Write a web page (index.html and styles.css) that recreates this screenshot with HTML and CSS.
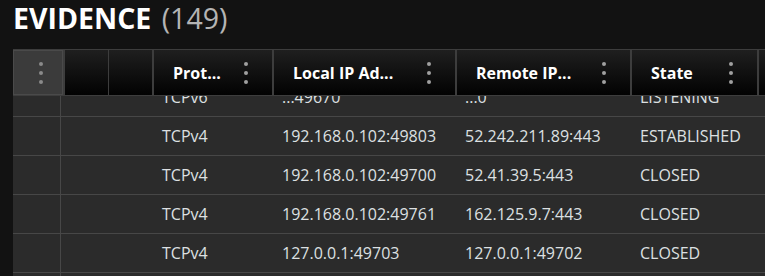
FILE: index.html
```html
<!DOCTYPE html>
<html>
<head>
<meta charset="utf-8">
<link rel="stylesheet" href="styles.css">
</head>
<body>
<div class="page">
  <h1 class="title"><span class="title-main">EVIDENCE</span> <span class="title-count">(149)</span></h1>
  <div class="grid">
    <div class="head">
      <div class="hcell hcell-menu"><svg class="kebab" width="4" height="22" viewBox="0 0 4 22"><circle cx="2" cy="2" r="2"/><circle cx="2" cy="11" r="2"/><circle cx="2" cy="20" r="2"/></svg></div>
      <div class="hcell"></div>
      <div class="hcell"></div>
      <div class="hcell"><span class="hlabel">Prot...</span><svg class="kebab" width="4" height="22" viewBox="0 0 4 22"><circle cx="2" cy="2" r="2"/><circle cx="2" cy="11" r="2"/><circle cx="2" cy="20" r="2"/></svg></div>
      <div class="hcell"><span class="hlabel">Local IP Ad...</span><svg class="kebab" width="4" height="22" viewBox="0 0 4 22"><circle cx="2" cy="2" r="2"/><circle cx="2" cy="11" r="2"/><circle cx="2" cy="20" r="2"/></svg></div>
      <div class="hcell"><span class="hlabel">Remote IP...</span><svg class="kebab" width="4" height="22" viewBox="0 0 4 22"><circle cx="2" cy="2" r="2"/><circle cx="2" cy="11" r="2"/><circle cx="2" cy="20" r="2"/></svg></div>
      <div class="hcell"><span class="hlabel">State</span><svg class="kebab" width="4" height="22" viewBox="0 0 4 22"><circle cx="2" cy="2" r="2"/><circle cx="2" cy="11" r="2"/><circle cx="2" cy="20" r="2"/></svg></div>
      <div class="hcell"></div>
    </div>
    <div class="viewport">
      <div class="rows">
        <div class="row"><div class="c-sel"></div><div class="c-gap"></div><div class="c">TCPv6</div><div class="c">:::49670</div><div class="c">:::0</div><div class="c">LISTENING</div></div>
        <div class="row"><div class="c-sel"></div><div class="c-gap"></div><div class="c">TCPv4</div><div class="c">192.168.0.102:49803</div><div class="c">52.242.211.89:443</div><div class="c">ESTABLISHED</div></div>
        <div class="row"><div class="c-sel"></div><div class="c-gap"></div><div class="c">TCPv4</div><div class="c">192.168.0.102:49700</div><div class="c">52.41.39.5:443</div><div class="c">CLOSED</div></div>
        <div class="row"><div class="c-sel"></div><div class="c-gap"></div><div class="c">TCPv4</div><div class="c">192.168.0.102:49761</div><div class="c">162.125.9.7:443</div><div class="c">CLOSED</div></div>
        <div class="row"><div class="c-sel"></div><div class="c-gap"></div><div class="c">TCPv4</div><div class="c">127.0.0.1:49703</div><div class="c">127.0.0.1:49702</div><div class="c">CLOSED</div></div>
        <div class="row"><div class="c-sel"></div><div class="c-gap"></div><div class="c"></div><div class="c"></div><div class="c"></div><div class="c"></div></div>
      </div>
    </div>
  </div>
</div>
</body>
</html>
```

FILE: styles.css
```css
html, body {
  margin: 0;
  padding: 0;
  background: #121212;
  height: 276px;
  overflow: hidden;
}

.page {
  padding-left: 13px;
  font-family: "Open Sans", "Noto Sans", sans-serif;
}

.title {
  margin: 0;
  height: 49px;
  font-size: 28.5px;
  line-height: 37px;
  font-weight: 700;
  color: #ffffff;
  white-space: nowrap;
}

.title-count {
  font-weight: 400;
  color: #b4b4b4;
  margin-left: 3px;
}

.grid {
  background: #2b2b2b;
}

.head {
  display: grid;
  grid-template-columns: 50px 42px 43px 118px 181px 173px 125px 1fr;
  column-gap: 2px;
  background: #3d3d3d;
  padding: 1px 0 1px 0;
  height: 45px;
  box-sizing: content-box;
}

.hcell {
  background: linear-gradient(#1f1f1f, #020202);
  display: flex;
  align-items: center;
  justify-content: space-between;
  padding: 0 24px 0 19px;
  min-width: 0;
  overflow: hidden;
}

.hcell-menu {
  background: #3b3b3b;
  border: 1px solid #4a4a4a;
  padding: 0 0 0 25px;
  justify-content: flex-start;
}

.hlabel {
  font-size: 16px;
  font-weight: 700;
  color: #ffffff;
  white-space: nowrap;
}

.kebab {
  fill: #a0a0a0;
  flex: none;
}

.hcell-menu .kebab {
  fill: #8a8a8a;
}

.viewport {
  height: 180px;
  overflow: hidden;
}

.rows {
  margin-top: -18px;
}

.row {
  display: grid;
  grid-template-columns: 48px 92px 120px 183px 175px 1fr;
  height: 38px;
  border-bottom: 1px solid #474747;
  background: #2b2b2b;
  font-size: 16px;
  color: #dde0e2;
}

.c-sel {
  border-right: 1px solid #474747;
}

.c {
  display: flex;
  align-items: center;
  padding-left: 9px;
  white-space: nowrap;
  overflow: hidden;
}
```
